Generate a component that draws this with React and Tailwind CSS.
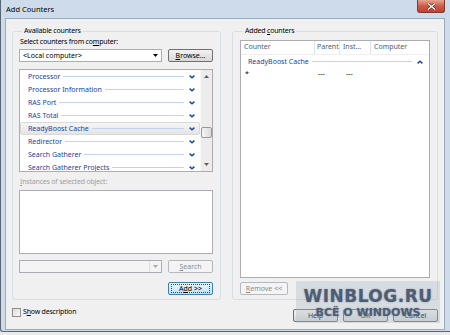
import React from "react";

const counters = [
  "Processor",
  "Processor Information",
  "RAS Port",
  "RAS Total",
  "ReadyBoost Cache",
  "Redirector",
  "Search Gatherer",
  "Search Gatherer Projects",
];

function Chevron({ up }) {
  return (
    <svg width="6" height="4" viewBox="0 0 6 4" className="shrink-0">
      <polyline
        points={up ? "0.6,3.4 3,1.2 5.4,3.4" : "0.6,0.6 3,2.8 5.4,0.6"}
        fill="none"
        stroke="#1f48a6"
        strokeWidth="1.5"
      />
    </svg>
  );
}

function Arrow({ up, color = "#000" }) {
  return (
    <svg width="5" height="3" viewBox="0 0 5 3" className="shrink-0">
      <polygon points={up ? "0,3 5,3 2.5,0" : "0,0 5,0 2.5,3"} fill={color} />
    </svg>
  );
}

function Btn({ children, kind, className = "" }) {
  const look =
    kind === "disabled"
      ? "border-[#b5b9bd] bg-[#f4f4f4] text-[#8d8d8d]"
      : kind === "focus"
      ? "border-[#3c7fb1] bg-linear-to-b from-[#eaf6fd] to-[#bde3fa] text-black"
      : "border-[#707070] bg-linear-to-b from-[#f3f3f3] to-[#d8d8d8] text-black";
  return (
    <div className={`h-[13px] w-[45px] rounded-[2px] border flex items-center justify-center leading-none ${look} ${className}`}>
      {kind === "focus" ? (
        <div className="h-[9px] w-[39px] border border-dotted border-[#444] flex items-center justify-center">{children}</div>
      ) : (
        children
      )}
    </div>
  );
}

function Combo({ disabled, children }) {
  return (
    <div className={`h-[13px] w-[143px] border border-[#abadb3] flex items-center ${disabled ? "bg-[#f4f4f4]" : "bg-white"}`}>
      <div className="flex-1 pl-[3px] leading-none">{children}</div>
      <div className={`w-[12px] h-full flex items-center justify-center ${disabled ? "border-l border-[#dcdcdc]" : ""}`}>
        <Arrow color={disabled ? "#a8a8a8" : "#000"} />
      </div>
    </div>
  );
}

function GroupBox({ label, children, className = "" }) {
  return (
    <div className={`border border-[#d5dfe5] rounded-[3px] px-[6px] pb-[4px] ${className}`}>
      <div className="-mt-[6px] ml-[3px] px-[2px] w-fit bg-[#f0f0f0] leading-[10px] h-[10px] tracking-[-0.2px]">{label}</div>
      {children}
    </div>
  );
}

export default function App() {
  return (
    <div className="w-[450px] h-[335px] overflow-hidden bg-[#ebebeb] text-[7px] text-black font-['Noto_Sans',sans-serif] relative">
      <div className="w-[450px] h-[332px] border-l border-b border-[#5a6470] rounded-bl-[3px] bg-[#cddbea] flex flex-col">
        {/* title bar */}
        <div className="h-[18px] flex items-start justify-between">
          <div className="pl-[5px] pt-[4px] text-[7.5px] leading-[10px] text-black">Add Counters</div>
          <div className="mr-[5px] w-[28px] h-[13px] rounded-b-[3px] border border-t-0 border-[#7b3a34] bg-linear-to-b from-[#e5a493] via-[#cf5a48] to-[#c2402d] flex items-center justify-center">
            <svg width="9" height="7" viewBox="0 0 9 7">
              <path d="M1 0.5 L8 6.5 M8 0.5 L1 6.5" stroke="#5a2320" strokeWidth="2.6" />
              <path d="M1 0.5 L8 6.5 M8 0.5 L1 6.5" stroke="#fff" strokeWidth="1.4" />
            </svg>
          </div>
        </div>

        {/* client area */}
        <div className="ml-[4px] w-[440px] h-[312px] border border-[#9aabbd] bg-[#f0f0f0] px-[6px] pt-[12px]">
          <div className="flex items-start gap-[11px]">
            {/* Available counters */}
            <GroupBox label="Available counters" className="w-[209px]">
              <div className="mt-[1px] leading-[10px] h-[10px] pl-[1px] tracking-[-0.2px]">
                Select counters from co<span className="underline">m</span>puter:
              </div>
              <div className="mt-[2px] flex items-center justify-between w-[194px]">
                <Combo>&lt;Local computer&gt;</Combo>
                <Btn>
                  <span className="underline">B</span>rowse...
                </Btn>
              </div>
              <div className="mt-[7px] w-[194px] h-[103px] border border-[#abadb3] bg-white flex overflow-hidden">
                <div className="flex-1 flex flex-col">
                  {counters.map((c) => (
                    <div
                      key={c}
                      className={`h-[13px] shrink-0 flex items-center pl-[7px] pr-[4px] ${
                        c === "ReadyBoost Cache"
                          ? "border border-[#d9d9d9] rounded-[2px] bg-linear-to-b from-[#f6f6f6] to-[#e4e4e4]"
                          : "border border-transparent"
                      }`}
                    >
                      <span className="text-[#2243a0] leading-none whitespace-nowrap">{c}</span>
                      <div className="flex-1 h-px bg-[#c4d2ee] ml-[3px] mr-[5px]" />
                      <Chevron />
                    </div>
                  ))}
                </div>
                <div className="w-[12px] bg-[#ececec] border-l border-[#f7f7f7] flex flex-col items-center">
                  <div className="h-[13px] flex items-center">
                    <Arrow up color="#5f5f5f" />
                  </div>
                  <div className="mt-[44px] w-[11px] h-[11px] rounded-[2px] border border-[#979797] bg-linear-to-r from-[#f4f4f4] to-[#dcdcdc]" />
                  <div className="mt-auto h-[13px] flex items-center">
                    <Arrow color="#5f5f5f" />
                  </div>
                </div>
              </div>
              <div className="mt-[5px] leading-[10px] h-[10px] pl-[1px] text-[#a0a0a0] tracking-[-0.2px]">
                <span className="underline">I</span>nstances of selected object:
              </div>
              <div className="mt-[3px] w-[194px] h-[64px] border border-[#abadb3] bg-white" />
              <div className="mt-[6px] flex items-center justify-between w-[194px]">
                <Combo disabled />
                <Btn kind="disabled">
                  <span className="underline">S</span>earch
                </Btn>
              </div>
              <div className="mt-[9px] flex justify-end w-[194px]">
                <Btn kind="focus">
                  A<span className="underline">d</span>d &gt;&gt;
                </Btn>
              </div>
            </GroupBox>

            {/* Added counters */}
            <GroupBox label={<span>Added <span className="underline">c</span>ounters</span>} className="w-[206px] px-[7px]">
              <div className="mt-[4px] w-[190px] h-[238px] border border-[#abadb3] bg-white flex flex-col">
                <div className="h-[14px] flex items-stretch text-[#4c607a] border-b border-[#f0f0f0]">
                  <div className="w-[74px] border-r border-[#e3e5e8] pl-[3px] flex items-center">Counter</div>
                  <div className="w-[25px] border-r border-[#e3e5e8] pl-[2px] flex items-center">Parent</div>
                  <div className="w-[31px] border-r border-[#e3e5e8] pl-[3px] flex items-center">Inst...</div>
                  <div className="flex-1 pl-[3px] flex items-center">Computer</div>
                </div>
                <div className="h-[13px] flex items-center pl-[7px] pr-[6px]">
                  <span className="text-[#2243a0] leading-none">ReadyBoost Cache</span>
                  <div className="flex-1 h-px bg-[#c4d2ee] ml-[3px] mr-[5px]" />
                  <Chevron up />
                </div>
                <div className="h-[10px] flex items-center leading-none">
                  <div className="w-[74px] pl-[4px]">*</div>
                  <div className="w-[29px] pl-[3px]">---</div>
                  <div className="pl-[2px]">---</div>
                </div>
              </div>
              <div className="mt-[4px]">
                <Btn kind="disabled" className="w-[48px]">
                  <span className="underline">R</span>emove &lt;&lt;
                </Btn>
              </div>
            </GroupBox>
          </div>

          {/* bottom row */}
          <div className="mt-[7px] flex items-start justify-between">
            <div className="flex items-center gap-[2px]">
              <div className="w-[9px] h-[9px] border border-[#8f8f8f] bg-linear-to-br from-[#dcdcdc] to-[#fafafa]" />
              <span className="leading-[10px] tracking-[-0.2px]">
                S<span className="underline">h</span>ow description
              </span>
            </div>
            <div className="mt-[2px] flex gap-[5px]">
              <Btn>Help</Btn>
              <Btn>OK</Btn>
              <Btn>Cancel</Btn>
            </div>
          </div>
        </div>
      </div>

      {/* watermark overlay */}
      <div className="absolute left-[296px] top-[281px] w-[144px] h-[42px] bg-[#aab6c6]/35 flex flex-col items-center justify-center font-['DejaVu_Sans',sans-serif] font-bold text-[#4e5d73] [text-shadow:0_0_2px_#8794a8]">
        <div className="text-[17px] leading-[20px] tracking-[0.5px]">WINBLOG.RU</div>
        <div className="text-[11px] leading-[13px]">ВСЁ О WINDOWS</div>
      </div>
    </div>
  );
}
